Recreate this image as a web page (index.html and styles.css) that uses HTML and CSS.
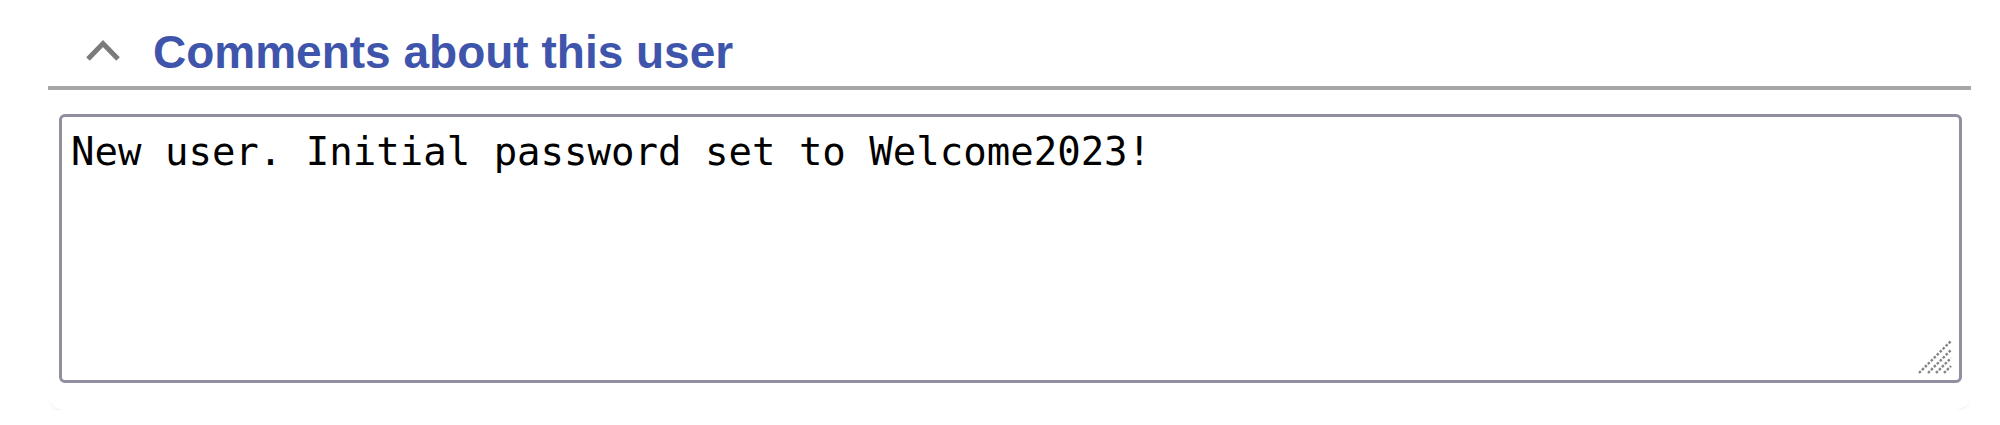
FILE: index.html
```html
<!DOCTYPE html>
<html lang="en">
<head>
<meta charset="utf-8">
<title>Comments about this user</title>
<link rel="stylesheet" href="styles.css">
</head>
<body>
<section class="card">
  <header class="card-header">
    <svg class="chevron" viewBox="0 0 36 24" width="36" height="24" aria-hidden="true">
      <path d="M3 20 L18 4.5 L33 20" fill="none" stroke="#7b7b7b" stroke-width="5" stroke-linejoin="miter"/>
    </svg>
    <h2 class="card-title">Comments about this user</h2>
  </header>
  <div class="field">
    <textarea class="comments" spellcheck="false">New user. Initial password set to Welcome2023!</textarea>
    <svg class="grip" viewBox="0 0 34 34" width="34" height="34" aria-hidden="true">
      <g stroke="#858585" stroke-width="2.4" stroke-dasharray="2.6 1.6" fill="none">
        <line x1="1" y1="33" x2="33" y2="1"/>
        <line x1="10" y1="33" x2="33" y2="10"/>
        <line x1="18" y1="33" x2="33" y2="18"/>
        <line x1="26" y1="33" x2="33" y2="26"/>
      </g>
    </svg>
  </div>
</section>
</body>
</html>
```
FILE: styles.css
```css
html, body {
  margin: 0;
  padding: 0;
  background: #ffffff;
}

.card {
  margin: 0 29px 0 48px;
  padding-bottom: 27px;
  background: #ffffff;
  border-radius: 0 0 16px 16px;
  box-shadow: 0 5px 6px -5px rgba(0, 0, 0, 0.12), 0 2px 3px -2px rgba(0, 0, 0, 0.05);
}

.card-header {
  display: flex;
  align-items: center;
  padding: 26px 0 7px 37px;
  border-bottom: 4px solid #a6a6a6;
}

.chevron {
  display: block;
  flex: none;
  margin-bottom: 4px;
}

.card-title {
  margin: 0 0 0 32px;
  font-family: "Liberation Sans", Arial, sans-serif;
  font-weight: bold;
  font-size: 46px;
  line-height: 53px;
  color: #3f55ab;
}

.field {
  position: relative;
  margin: 24px 9px 0 11px;
}

.comments {
  display: block;
  box-sizing: border-box;
  width: 100%;
  height: 269px;
  margin: 0;
  padding: 12px 9px;
  border: 3px solid #8f8fa0;
  border-radius: 6px;
  font-family: "DejaVu Sans Mono", monospace;
  font-size: 39px;
  color: #000000;
  background: #ffffff;
  resize: none;
  outline: none;
}

.grip {
  position: absolute;
  right: 10px;
  bottom: 9px;
  pointer-events: none;
}
```
